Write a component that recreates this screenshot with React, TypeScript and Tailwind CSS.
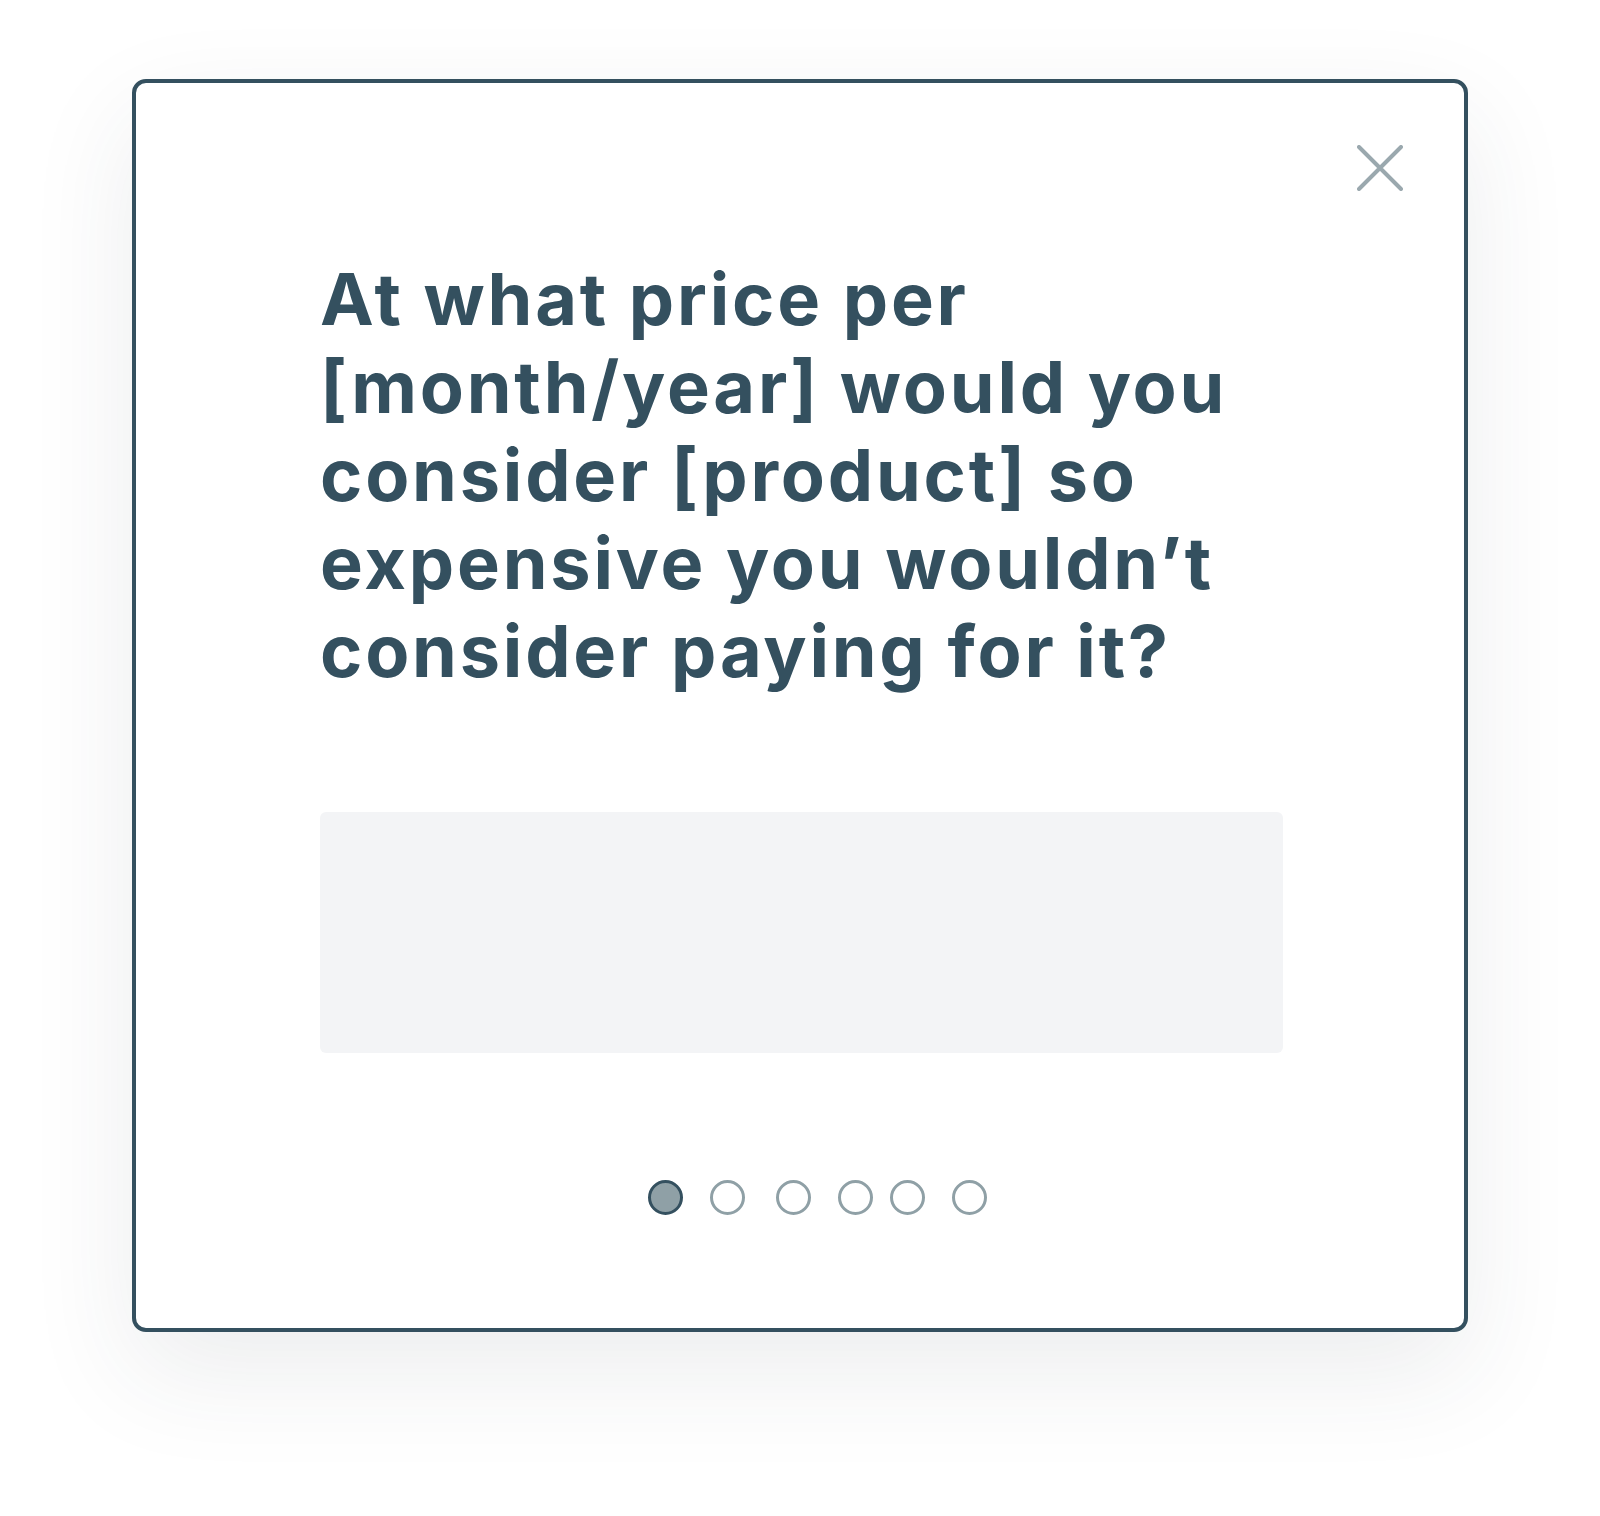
import React, { useState } from "react";

// Survey question modal with a free-text answer area and step dots
const STEPS = [0, 1, 2, 3, 4, 5];
const DOT_GAPS = ["ml-0", "ml-[27px]", "ml-[31px]", "ml-[27px]", "ml-[17px]", "ml-[27px]"];

const CloseIcon = () => (
  <svg width="46" height="46" viewBox="0 0 46 46" fill="none">
    <path
      d="M2 2L44 44M44 2L2 44"
      stroke="#9aa8ae"
      strokeWidth="4"
      strokeLinecap="round"
    />
  </svg>
);

const App = () => {
  const [step] = useState(0);

  return (
    <div className="w-full min-h-[1516px] bg-white pt-[79px] font-['Inter',sans-serif]">
      <div className="relative mx-auto w-[1336px] h-[1253px] bg-white rounded-[14px] border-[4px] border-[#34505f] shadow-[0_40px_110px_rgba(40,60,70,0.09)]">
        <button className="absolute top-[62px] right-[61px] p-0">
          <CloseIcon />
        </button>

        <div className="pl-[184px] pt-[172px]">
          <h1 className="text-[72px] leading-[88px] font-bold text-[#34505f] tracking-[2.8px] w-[1000px]">
            At what price per [month/year] would you consider [product] so
            expensive you wouldn’t consider paying for it?
          </h1>

          <textarea className="mt-[117px] block w-[963px] h-[241px] rounded-[6px] bg-[#f3f4f6] resize-none outline-none" />

          <div className="flex items-center mt-[127px] ml-[328px]">
            {STEPS.map((s) => (
              <span
                key={s}
                className={`${DOT_GAPS[s]} w-[35px] h-[35px] rounded-full border-[3px] ${
                  s === step
                    ? "bg-[#8fa0a6] border-[#34505f]"
                    : "bg-white border-[#8fa0a6]"
                }`}
              />
            ))}
          </div>
        </div>
      </div>
    </div>
  );
};

export default App;
